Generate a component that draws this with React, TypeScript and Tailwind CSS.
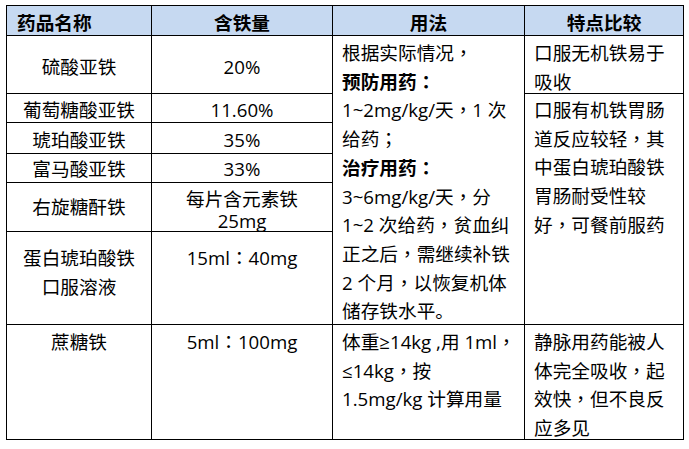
import React from "react";

const font = { fontFamily: "'Open Sans', 'Noto Sans CJK SC', sans-serif" };
const tc = { fontFamily: "'Open Sans', 'Noto Sans CJK TC', sans-serif" };

function T({ s }: { s: string }) {
  const parts = s.split(/([，；：])/);
  return (
    <>
      {parts.map((p, i) =>
        /^[，；：]$/.test(p) ? (
          <span key={i} style={tc}>
            {p}
          </span>
        ) : (
          <React.Fragment key={i}>{p}</React.Fragment>
        )
      )}
    </>
  );
}

function Lines({ lines, boldIdx = [] as number[] }: { lines: string[]; boldIdx?: number[] }) {
  return (
    <>
      {lines.map((l, i) => (
        <div key={i} className={boldIdx.includes(i) ? "font-bold" : ""}>
          <T s={l} />
        </div>
      ))}
    </>
  );
}

export default function App() {
  const c = "bg-white";
  const h = "bg-[#c6d9f1] font-bold pt-[6px] leading-[22px]";
  return (
    <div className="w-[689px] h-[449px] bg-white overflow-hidden text-black" style={font}>
      <div className="ml-[6px] mt-[5px] w-[678px] bg-black p-px gap-px grid grid-cols-[144px_180px_191px_158px] grid-rows-[29px_57px_28px_30px_28px_48px_92px_114px] text-[18.67px] leading-[28.7px]">
        {/* header */}
        <div className={`${h} pl-[10px]`}>药品名称</div>
        <div className={`${h} text-center`}>含铁量</div>
        <div className={`${h} text-center`}>用法</div>
        <div className={`${h} text-center`}>特点比较</div>

        {/* row 1 */}
        <div className={`${c} text-center pt-[17px]`}>硫酸亚铁</div>
        <div className={`${c} text-center pt-[17px]`}>20%</div>
        <div className={`${c} row-span-6 pt-[3px] pl-[9px]`}>
          <Lines
            lines={[
              "根据实际情况，",
              "预防用药：",
              "1~2mg/kg/天，1 次",
              "给药；",
              "治疗用药：",
              "3~6mg/kg/天，分",
              "1~2 次给药，贫血纠",
              "正之后，需继续补铁",
              "2 个月，以恢复机体",
              "储存铁水平。",
            ]}
            boldIdx={[1, 4]}
          />
        </div>
        <div className={`${c} pt-[3px] pl-[9px]`}>
          <Lines lines={["口服无机铁易于", "吸收"]} />
        </div>

        {/* row 2 */}
        <div className={`${c} text-center pt-[2px]`}>葡萄糖酸亚铁</div>
        <div className={`${c} text-center pt-[2px]`}>11.60%</div>
        <div className={`${c} row-span-5 pt-[2px] pl-[9px]`}>
          <Lines
            lines={["口服有机铁胃肠", "道反应较轻，其", "中蛋白琥珀酸铁", "胃肠耐受性较", "好，可餐前服药"]}
          />
        </div>

        {/* row 3 */}
        <div className={`${c} text-center pt-[3px]`}>琥珀酸亚铁</div>
        <div className={`${c} text-center pt-[3px]`}>35%</div>

        {/* row 4 */}
        <div className={`${c} text-center pt-[1px]`}>富马酸亚铁</div>
        <div className={`${c} text-center pt-[1px]`}>33%</div>

        {/* row 5 */}
        <div className={`${c} text-center pt-[10px]`}>右旋糖酐铁</div>
        <div className={`${c} text-center pt-[5px] leading-[22px]`}>
          <div>每片含元素铁</div>
          <div>25mg</div>
        </div>

        {/* row 6 */}
        <div className={`${c} text-center pt-[12px]`}>
          <div>蛋白琥珀酸铁</div>
          <div>口服溶液</div>
        </div>
        <div className={`${c} text-center pt-[12px]`}>
          <T s="15ml：40mg" />
        </div>

        {/* row 7 */}
        <div className={`${c} text-center pt-[3px]`}>蔗糖铁</div>
        <div className={`${c} text-center pt-[3px]`}>
          <T s="5ml：100mg" />
        </div>
        <div className={`${c} pt-[3px] pl-[9px]`}>
          <Lines lines={["体重≥14kg ,用 1ml，", "≤14kg，按", "1.5mg/kg 计算用量"]} />
        </div>
        <div className={`${c} pt-[3px] pl-[9px]`}>
          <Lines lines={["静脉用药能被人", "体完全吸收，起", "效快，但不良反", "应多见"]} />
        </div>
      </div>
    </div>
  );
}
